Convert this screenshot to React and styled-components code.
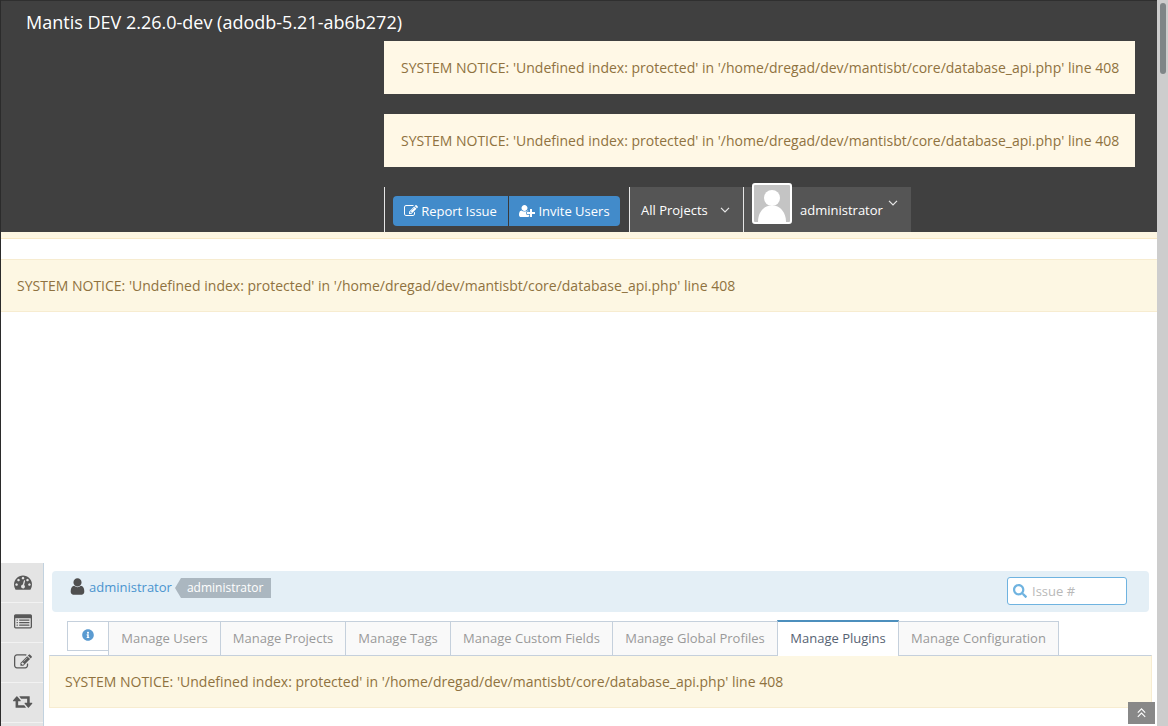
import React from "react";
import styled, { createGlobalStyle } from "styled-components";
import { FaInfoCircle, FaSearch } from "react-icons/fa";

const Global = createGlobalStyle`
  html, body { margin: 0; padding: 0; height: 726px; overflow: hidden; background: #fff; }
  * { box-sizing: border-box; }
  body { font-family: "Open Sans", sans-serif; font-size: 13px; color: #393939; }
`;
const Viewport = styled.div`display: flex; width: 1168px; height: 726px; overflow: hidden;`;
const Page = styled.div`width: 1157px; height: 726px; border-left: 1px solid #2b2b2b; display: flex; flex-direction: column; position: relative;`;
const Scrollbar = styled.div`width: 11px; height: 726px; background: #cdcdcd; padding: 3px 2px 0 3px;`;
const Thumb = styled.div`width: 6px; height: 71px; border-radius: 3px; background: #7f8587;`;

const Navbar = styled.header`height: 232px; background: #404040; flex: none; display: flex; flex-direction: column; border-top: 1px solid #2f2f2f;`;
const Brand = styled.div`color: #fff; font-size: 18px; line-height: 24px; padding: 9px 0 0 25px; height: 40px;`;
const NavRight = styled.div`margin-left: 383px; width: 751px; display: flex; flex-direction: column;`;
const TopNotice = styled.div`
  height: 53px; background: #fff8e6; color: #8f7240; font-size: 14px; line-height: 53px; word-spacing: 0.07px;
  padding-left: 17px; margin-bottom: 20px; white-space: nowrap;
`;
const NavRow = styled.div`display: flex; align-items: stretch; height: 45px; width: 800px;`;
const BtnCell = styled.div`border-left: 1px solid #e5e5e5; width: 245px; padding: 9px 0 0 8px; height: 45px;`;
const BtnGroup = styled.div`display: flex; height: 30px; width: 227px;`;
const Btn = styled.div`
  height: 30px; background: #428bca; color: #fff; font-size: 13px; display: flex; align-items: center; justify-content: center; gap: 3px;
  width: ${p => p.$w}px; border-radius: ${p => p.$r}; white-space: nowrap;
  border-left: ${p => (p.$sep ? "1px solid #3a3a3a" : "0")};
  svg { font-size: 14px; }
`;
const NavItem = styled.div`
  background: #555; color: #fff; border-left: 1px solid #e5e5e5; font-size: 13px; display: flex; align-items: center; width: ${p => p.$w}px;
  padding-left: 11px; height: 45px; white-space: nowrap;
`;
const CaretWrap = styled.span`display: flex; color: #e8e8e8; margin-left: ${p => p.$ml}px; margin-top: ${p => p.$mt}px;`;
const UserItem = styled.div`
  background: #555; color: #fff; border-left: 1px solid #e5e5e5; width: 168px; height: 45px; font-size: 13px; display: flex; align-items: flex-start; padding-left: 8px; white-space: nowrap;
`;
const Avatar = styled.div`width: 40px; height: 41px; border: 2px solid #fff; border-radius: 3px; background: #c4c4c4; margin-top: -4px; overflow: hidden; flex: none;`;
const UserName = styled.span`margin-left: 8px; line-height: 46px;`;

const Strip = styled.div`height: 7px; background: #fdf6e2; border-bottom: 1px solid #f8e8c4; flex: none;`;
const MiddleNotice = styled.div`
  margin-top: 20px; height: 53px; background: #fdf7e3; border-top: 1px solid #f7ecd0; border-bottom: 1px solid #f7ecd0; color: #8f7240; font-size: 14px; line-height: 51px; padding-left: 16px; flex: none; white-space: nowrap; word-spacing: 0.07px;
`;
const Spacer = styled.div`height: 250px; flex: none;`;
const Main = styled.div`display: flex; flex: 1; min-height: 0;`;
const Sidebar = styled.nav`width: 43px; background: #e4e4e4; border-right: 1px solid #c2d2df; flex: none; display: flex; flex-direction: column; margin-top: 1px;`;
const SideItem = styled.div`
  height: 40px; flex: none; border-bottom: 1px solid #f2f2f2; display: flex; align-items: center; justify-content: center; color: #585858; font-size: 18px; padding: 0 0 2px 2px;
`;
const Content = styled.main`flex: 1; min-width: 0; padding: 9px 4px 0 7px;`;
const Breadcrumbs = styled.div`
  height: 41px; margin-left: 1px; width: 1097px; background: #e4eff6; border-radius: 4px; display: flex; align-items: flex-start; padding: 0 22px 0 17px;
`;
const UserIcon = styled.span`color: #4f4f4f; font-size: 19px; display: flex; margin: 6px 2px 0 -1px;`;
const UserLink = styled.a`color: #4a94cf; font-size: 13px; line-height: 20px; margin: 6px 3px 0 0;`;
const Tag = styled.span`
  position: relative; background: #abb7c0; color: #fff; font-size: 12px; height: 20px; line-height: 19px; padding: 0 8px 0 6px; margin: 7px 0 0 6px;
  &::before { content: ""; position: absolute; left: -6px; top: 0; border-style: solid; border-width: 10px 6px 10px 0; border-color: transparent #abb7c0 transparent transparent; }
`;
const SearchBox = styled.div`
  margin: 6px 0 0 auto; width: 120px; height: 28px; border: 1px solid #6fb3e0; border-radius: 3px; background: #fff; display: flex; align-items: center; padding-left: 5px; gap: 5px; color: #6fb3e0; font-size: 14px;
`;
const Placeholder = styled.span`color: #b9b9b9; font-size: 13px;`;
const Tabs = styled.div`display: flex; margin: 9px 0 0 16px; height: 35px; align-items: flex-start; position: relative; z-index: 1;`;
const Tab = styled.div`
  width: ${p => p.$w}px; text-align: center; font-size: 13px; white-space: nowrap; margin-left: -1px; position: relative;
  height: ${p => (p.$active ? 36 : 34)}px; line-height: ${p => (p.$active ? 32 : 33)}px; margin-top: ${p => (p.$active ? -1 : 0)}px;
  background: ${p => (p.$active ? "#fff" : "#f9f9f9")};
  color: ${p => (p.$active ? "#576373" : "#999")};
  border: 1px solid #c5d0dc; border-bottom: 0;
  border-top: ${p => (p.$active ? "2px solid #4c8fbd" : "1px solid #c5d0dc")};
  z-index: ${p => (p.$active ? 2 : 1)};
`;
const InfoTab = styled.div`
  width: 42px; height: 30px; border: 1px solid #c5d0dc; background: #fff; color: #5b9bd1; display: flex; align-items: center; justify-content: center; font-size: 12px; padding-bottom: 3px;
`;
const TabAlert = styled.div`
  height: 53px; width: 1103px; margin: -1px 0 0 -2px; background: #fdf7e3; border: 1px solid #f7ecd0; border-top: 1px solid #c5d0dc; color: #8f7240; font-size: 14px; line-height: 51px; padding-left: 15px; white-space: nowrap; word-spacing: 0.07px;
`;
const ScrollTop = styled.div`
  position: absolute; right: 2px; top: 702px; width: 27px; height: 22px; background: #888; color: #fff; display: flex; align-items: center; justify-content: center;
`;

const FaIcon = ({ d, w = 1792 }) => (
  <svg width={`${w / 1792}em`} height="1em" viewBox={`0 0 ${w} 1792`} fill="currentColor"><path d={d} /></svg>
);
const dashboard = "M384 1152q0-53-37.5-90.5t-90.5-37.5-90.5 37.5-37.5 90.5 37.5 90.5 90.5 37.5 90.5-37.5 37.5-90.5zm192-448q0-53-37.5-90.5t-90.5-37.5-90.5 37.5-37.5 90.5 37.5 90.5 90.5 37.5 90.5-37.5 37.5-90.5zm428 481l101-382q6-26-7.5-48.5t-38.5-29.5-48 6.5-30 39.5l-101 382q-60 5-107 43.5t-63 98.5q-20 77 20 146t117 89 146-20 89-117q16-60-6-117t-72-91zm660-33q0-53-37.5-90.5t-90.5-37.5-90.5 37.5-37.5 90.5 37.5 90.5 90.5 37.5 90.5-37.5 37.5-90.5zm-640-640q0-53-37.5-90.5t-90.5-37.5-90.5 37.5-37.5 90.5 37.5 90.5 90.5 37.5 90.5-37.5 37.5-90.5zm448 192q0-53-37.5-90.5t-90.5-37.5-90.5 37.5-37.5 90.5 37.5 90.5 90.5 37.5 90.5-37.5 37.5-90.5zm320 448q0 261-141 483-19 29-54 29h-1402q-35 0-54-29-141-221-141-483 0-182 71-348t191-286 286-191 348-71 348 71 286 191 191 286 71 348z";
const listAlt = "M384 1184v64q0 13-9.5 22.5t-22.5 9.5h-64q-13 0-22.5-9.5t-9.5-22.5v-64q0-13 9.5-22.5t22.5-9.5h64q13 0 22.5 9.5t9.5 22.5zm0-256v64q0 13-9.5 22.5t-22.5 9.5h-64q-13 0-22.5-9.5t-9.5-22.5v-64q0-13 9.5-22.5t22.5-9.5h64q13 0 22.5 9.5t9.5 22.5zm0-256v64q0 13-9.5 22.5t-22.5 9.5h-64q-13 0-22.5-9.5t-9.5-22.5v-64q0-13 9.5-22.5t22.5-9.5h64q13 0 22.5 9.5t9.5 22.5zm1152 512v64q0 13-9.5 22.5t-22.5 9.5h-960q-13 0-22.5-9.5t-9.5-22.5v-64q0-13 9.5-22.5t22.5-9.5h960q13 0 22.5 9.5t9.5 22.5zm0-256v64q0 13-9.5 22.5t-22.5 9.5h-960q-13 0-22.5-9.5t-9.5-22.5v-64q0-13 9.5-22.5t22.5-9.5h960q13 0 22.5 9.5t9.5 22.5zm0-256v64q0 13-9.5 22.5t-22.5 9.5h-960q-13 0-22.5-9.5t-9.5-22.5v-64q0-13 9.5-22.5t22.5-9.5h960q13 0 22.5 9.5t9.5 22.5zm128 704v-832q0-13-9.5-22.5t-22.5-9.5h-1472q-13 0-22.5 9.5t-9.5 22.5v832q0 13 9.5 22.5t22.5 9.5h1472q13 0 22.5-9.5t9.5-22.5zm128-1088v1088q0 66-47 113t-113 47h-1472q-66 0-113-47t-47-113v-1088q0-66 47-113t113-47h1472q66 0 113 47t47 113z";
const edit = "M888 1184l116-116-152-152-116 116v56h96v96h56zm440-720q-16-16-33 1l-350 350q-17 17-1 33t33-1l350-350q17-17 1-33zm80 594v190q0 119-84.5 203.5t-203.5 84.5h-832q-119 0-203.5-84.5t-84.5-203.5v-832q0-119 84.5-203.5t203.5-84.5h832q63 0 117 25 15 7 18 23 3 17-9 29l-49 49q-14 14-32 8-23-6-45-6h-832q-66 0-113 47t-47 113v832q0 66 47 113t113 47h832q66 0 113-47t47-113v-126q0-13 9-22l64-64q15-15 35-7t20 29zm-96-738l288 288-672 672h-288v-288zm444 132l-92 92-288-288 92-92q28-28 68-28t68 28l152 152q28 28 28 68t-28 68z";
const retweet = "M1280 1440q0 13-9.5 22.5t-22.5 9.5h-960q-8 0-13.5-2t-9-7-5.5-8-3-11.5-1-11.5v-600h-192q-26 0-45-19t-19-45q0-24 15-41l320-384q19-22 49-22t49 22l320 384q15 17 15 41 0 26-19 45t-45 19h-192v384h576q16 0 25 11l160 192q7 11 7 21zm640-416q0 24-15 41l-320 384q-20 23-49 23t-49-23l-320-384q-15-17-15-41 0-26 19-45t45-19h192v-384h-576q-16 0-25-12l-160-192q-7-9-7-20 0-13 9.5-22.5t22.5-9.5h960q8 0 13.5 2t9 7 5.5 8 3 11.5 1 11.5v600h192q26 0 45 19t19 45z";
const user = "M1536 1399q0 109-62.5 187t-150.5 78h-854q-88 0-150.5-78t-62.5-187q0-85 8.5-160.5t31.5-152 58.5-131 94-89 134.5-34.5q131 128 313 128t313-128q76 0 134.5 34.5t94 89 58.5 131 31.5 152 8.5 160.5zm-256-887q0 159-112.5 271.5t-271.5 112.5-271.5-112.5-112.5-271.5 112.5-271.5 271.5-112.5 271.5 112.5 112.5 271.5z";
const userPlus = "M704 896q-159 0-271.5-112.5t-112.5-271.5 112.5-271.5 271.5-112.5 271.5 112.5 112.5 271.5-112.5 271.5-271.5 112.5zm960 128h352q13 0 22.5 9.5t9.5 22.5v192q0 13-9.5 22.5t-22.5 9.5h-352v352q0 13-9.5 22.5t-22.5 9.5h-192q-13 0-22.5-9.5t-9.5-22.5v-352h-352q-13 0-22.5-9.5t-9.5-22.5v-192q0-13 9.5-22.5t22.5-9.5h352v-352q0-13 9.5-22.5t22.5-9.5h192q13 0 22.5 9.5t9.5 22.5v352zm-736 224q0 52 38 90t90 38h256v238q-68 50-171 50h-874q-121 0-194-69t-73-190q0-53 3.5-103.5t14-109 26.5-108.5 43-97.5 62-81 85.5-53.5 111.5-20q19 0 39 17 79 61 154.5 91.5t164.5 30.5 164.5-30.5 154.5-91.5q20-17 39-17 132 0 217 96h-223q-52 0-90 38t-38 90v192z";

const Chevron = () => (
  <svg width="10" height="6" viewBox="0 0 10 6" fill="none" stroke="currentColor" strokeWidth="1.2"><path d="M1 .8l4 4 4-4" /></svg>
);
const DoubleUp = () => (
  <svg width="9" height="10" viewBox="0 0 9 10" fill="none" stroke="currentColor" strokeWidth="1.1"><path d="M.8 4.6l3.7-3.7 3.7 3.7M.8 8.8l3.7-3.7 3.7 3.7" /></svg>
);

const notice = "SYSTEM NOTICE: 'Undefined index: protected' in '/home/dregad/dev/mantisbt/core/database_api.php' line 408";
const tabs = [
  ["Manage Users", 113], ["Manage Projects", 126], ["Manage Tags", 106], ["Manage Custom Fields", 163],
  ["Manage Global Profiles", 166], ["Manage Plugins", 122], ["Manage Configuration", 161],
];

export default function App() {
  return (
    <Viewport>
      <Global />
      <Page>
        <Navbar>
          <Brand>Mantis DEV 2.26.0-dev (adodb-5.21-ab6b272)</Brand>
          <NavRight>
            <TopNotice>{notice}</TopNotice>
            <TopNotice>{notice}</TopNotice>
            <NavRow>
              <BtnCell>
                <BtnGroup>
                  <Btn $w={115} $r="4px 0 0 4px"><FaIcon d={edit} />Report Issue</Btn>
                  <Btn $w={112} $r="0 4px 4px 0" $sep><FaIcon d={userPlus} w={2048} />Invite Users</Btn>
                </BtnGroup>
              </BtnCell>
              <NavItem $w={114}>All Projects<CaretWrap $ml={12} $mt={0}><Chevron /></CaretWrap></NavItem>
              <UserItem>
                <Avatar>
                  <svg width="36" height="37" viewBox="0 0 36 37">
                    <circle cx="18" cy="13" r="8" fill="#fff" />
                    <path d="M4 37c0-10 6-15 10-16h8c4 1 10 6 10 16z" fill="#fff" />
                  </svg>
                </Avatar>
                <UserName>administrator</UserName>
                <CaretWrap $ml={5} $mt={13}><Chevron /></CaretWrap>
              </UserItem>
            </NavRow>
          </NavRight>
        </Navbar>
        <Strip />
        <MiddleNotice>{notice}</MiddleNotice>
        <Spacer />
        <Main>
          <Sidebar>
            <SideItem><FaIcon d={dashboard} /></SideItem>
            <SideItem><FaIcon d={listAlt} /></SideItem>
            <SideItem><FaIcon d={edit} /></SideItem>
            <SideItem><FaIcon d={retweet} w={1920} /></SideItem>
          </Sidebar>
          <Content>
            <Breadcrumbs>
              <UserIcon><FaIcon d={user} /></UserIcon>
              <UserLink>administrator</UserLink>
              <Tag>administrator</Tag>
              <SearchBox><FaSearch /><Placeholder>Issue #</Placeholder></SearchBox>
            </Breadcrumbs>
            <Tabs>
              <InfoTab><FaInfoCircle /></InfoTab>
              {tabs.map(([t, w]) => <Tab key={t} $w={w} $active={t === "Manage Plugins"}>{t}</Tab>)}
            </Tabs>
            <TabAlert>{notice}</TabAlert>
          </Content>
        </Main>
        <ScrollTop><DoubleUp /></ScrollTop>
      </Page>
      <Scrollbar><Thumb /></Scrollbar>
    </Viewport>
  );
}
